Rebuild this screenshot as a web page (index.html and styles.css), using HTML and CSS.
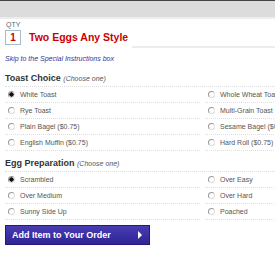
FILE: index.html
```html
<!DOCTYPE html>
<html lang="en">
<head>
    <meta charset="UTF-8">
    <title>Two Eggs Any Style</title>
    <link rel="stylesheet" href="styles.css">
</head>
<body>

    <div class="topbar"></div>

    <div class="item-head">
        <div class="qty">
            <div class="qty-label">QTY</div>
            <div class="qty-box">1</div>
        </div>
        <h1 class="item-title">Two Eggs Any Style</h1>
        <div class="head-rule"></div>
    </div>

    <a class="skip-link" href="#">Skip to the Special Instructions box</a>

    <div class="choice-group toast-group">
        <div class="choice-title">Toast Choice <span class="choose">(Choose one)</span></div>
        <div class="choices">
            <label class="choice"><span class="radio checked"></span>White Toast</label>
            <label class="choice"><span class="radio"></span>Whole Wheat Toast</label>
            <label class="choice"><span class="radio"></span>Rye Toast</label>
            <label class="choice"><span class="radio"></span>Multi-Grain Toast</label>
            <label class="choice"><span class="radio"></span>Plain Bagel ($0.75)</label>
            <label class="choice"><span class="radio"></span>Sesame Bagel ($0.75)</label>
            <label class="choice"><span class="radio"></span>English Muffin ($0.75)</label>
            <label class="choice"><span class="radio"></span>Hard Roll ($0.75)</label>
        </div>
    </div>

    <div class="choice-group">
        <div class="choice-title">Egg Preparation <span class="choose">(Choose one)</span></div>
        <div class="choices">
            <label class="choice"><span class="radio checked"></span>Scrambled</label>
            <label class="choice"><span class="radio"></span>Over Easy</label>
            <label class="choice"><span class="radio"></span>Over Medium</label>
            <label class="choice"><span class="radio"></span>Over Hard</label>
            <label class="choice"><span class="radio"></span>Sunny Side Up</label>
            <label class="choice"><span class="radio"></span>Poached</label>
        </div>
    </div>

    <button class="add-button">Add Item to Your Order <span class="arrow"></span></button>

</body>
</html>
```

FILE: styles.css
```css
body {
    margin: 0;
    width: 275px;
    overflow: hidden;
    font-family: "Liberation Sans", Arial, sans-serif;
    color: #555;
    background: #fff;
}

.topbar {
    height: 16px;
    border-top: 1px solid #444;
    border-bottom: 2px solid #ececec;
    background: #dcdcdc;
}

.item-head {
    display: flex;
    align-items: flex-end;
    padding: 2px 0 0 5px;
}

.qty-label {
    font-size: 7px;
    color: #666;
    line-height: 8px;
    margin-left: 1px;
}

.qty-box {
    width: 14px;
    height: 13px;
    margin-top: 1px;
    border: 1px solid #a9bccc;
    color: #c00;
    font-size: 10px;
    font-weight: bold;
    line-height: 13px;
    text-align: center;
}

.item-title {
    margin: 0 0 1px 8px;
    font-size: 10.5px;
    line-height: 13px;
    color: #c00;
    white-space: nowrap;
}

.head-rule {
    flex: 1;
    margin: 0 0 -3px 4px;
    border-bottom: 2px solid #ececec;
}

.skip-link {
    display: block;
    margin: 10px 0 0 5px;
    font-size: 7px;
    line-height: 8px;
    font-style: italic;
    color: #33339a;
    text-decoration: none;
}

.choice-group {
    margin: 7px 0 0 5px;
}

.toast-group {
    margin-top: 10px;
}

.choice-title {
    font-size: 9px;
    font-weight: bold;
    color: #333;
    line-height: 11px;
    padding-bottom: 2px;
    border-bottom: 1px dotted #ddd;
}

.choose {
    font-size: 7px;
    font-weight: normal;
    font-style: italic;
    color: #555;
}

.choices {
    display: grid;
    grid-template-columns: 195px 195px;
    column-gap: 5px;
}

.choice {
    display: flex;
    align-items: center;
    height: 15px;
    border-bottom: 1px dotted #ddd;
    font-size: 7px;
    white-space: nowrap;
}

.radio {
    width: 5px;
    height: 5px;
    margin: 0 5px 0 3px;
    border-radius: 50%;
    border: 1px solid;
    border-color: #999 #ddd #ddd #999;
    background: #fff;
}

.radio.checked {
    background: radial-gradient(circle, #111 55%, #fff 70%);
}

.add-button {
    display: flex;
    align-items: center;
    justify-content: space-between;
    width: 145px;
    height: 20px;
    margin: 5px 0 0 5px;
    padding: 0 6px;
    border: 1px solid #251a7a;
    background: linear-gradient(#473cb2, #2f2596);
    color: #fff;
    font-family: "Liberation Sans", Arial, sans-serif;
    font-size: 9px;
    font-weight: bold;
}

.arrow {
    width: 0;
    height: 0;
    border-left: 4px solid #fff;
    border-top: 4px solid transparent;
    border-bottom: 4px solid transparent;
    margin-right: 1px;
}
```
